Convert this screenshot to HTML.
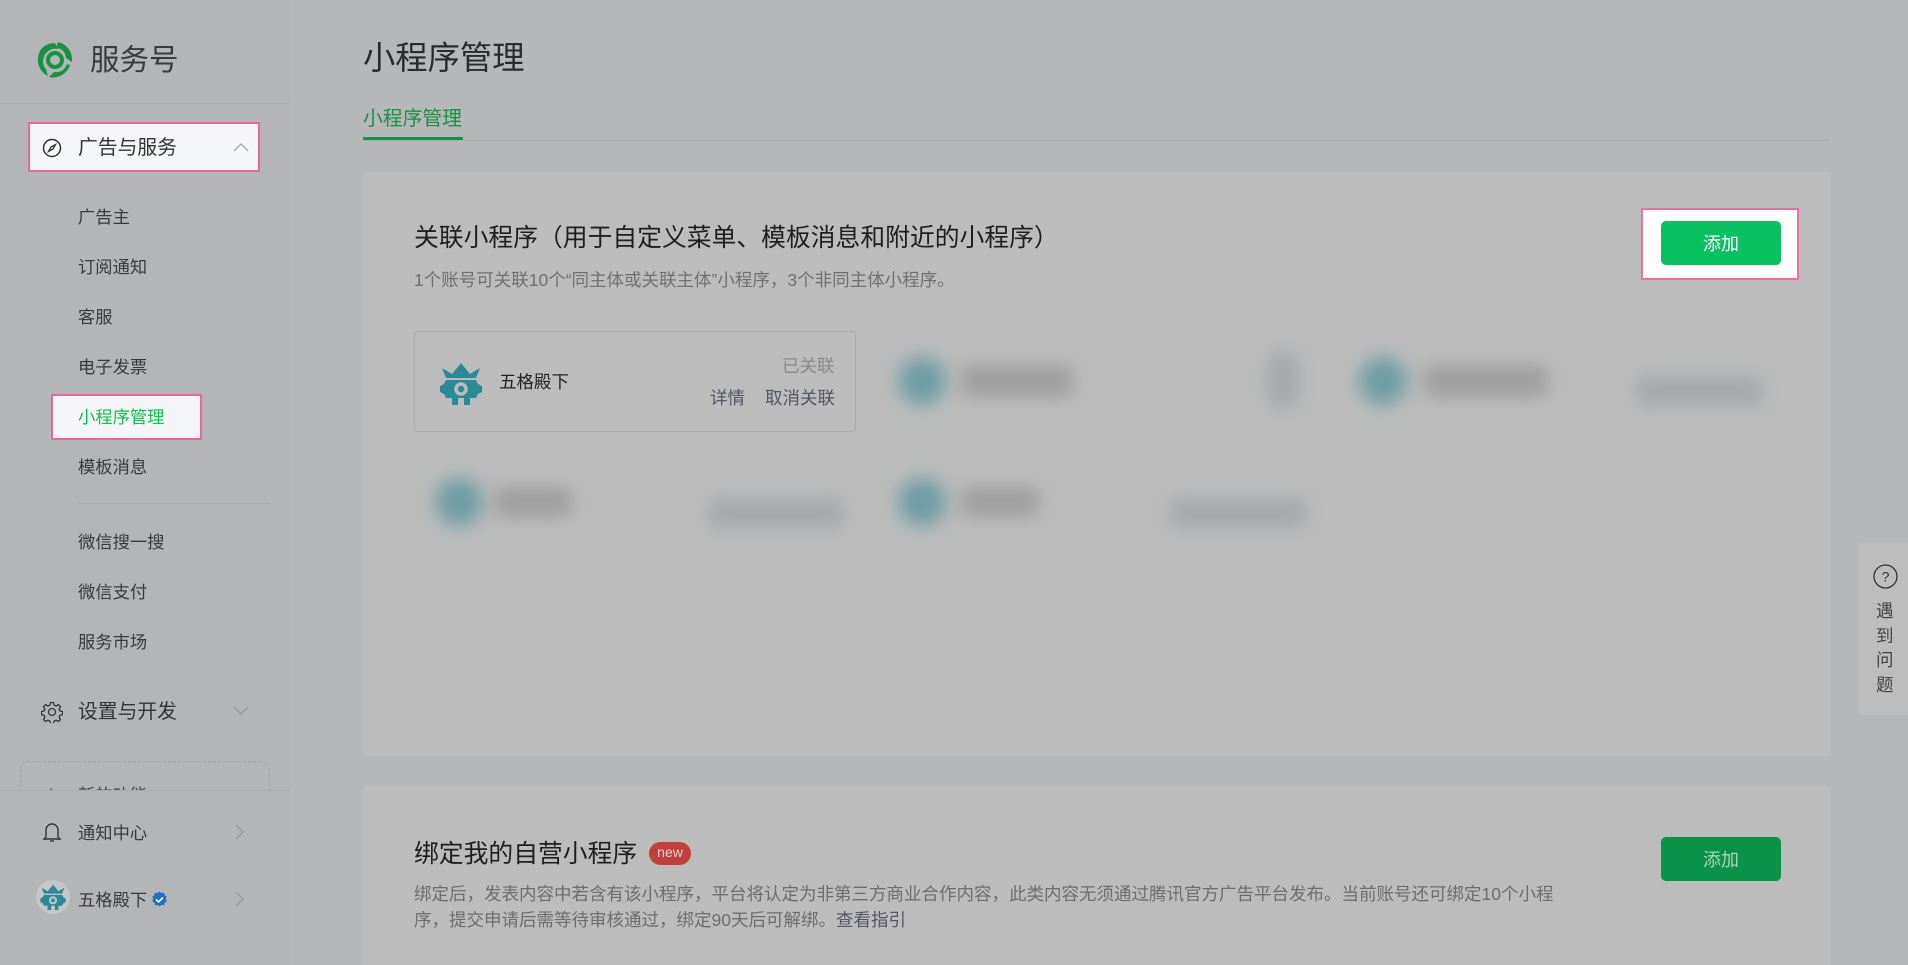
<!DOCTYPE html>
<html><head><meta charset="utf-8">
<style>
*{margin:0;padding:0;box-sizing:border-box}
html,body{width:1908px;height:965px;overflow:hidden}
body{background:#b6b7b9;font-family:"Liberation Sans","Noto Sans CJK SC",sans-serif;position:relative;color:#333}
.a{position:absolute;white-space:nowrap}
.side{position:absolute;left:0;top:0;width:290px;height:965px;background:#b4b5b7}
.mi{position:absolute;left:78px;font-size:17.3px;color:#3a3a3a;line-height:20px}
.card{position:absolute;background:#bcbcbc;border-radius:3px}
.blur{position:absolute;filter:blur(9px)}
</style></head><body>
<div class="side">
  <svg class="a" style="left:34px;top:40px" width="42" height="40" viewBox="0 0 42 40">
    <path d="M21 3 C10 3 3 11 4 21 C4 27 8 33 14 36 L12 29 C8 25 8 17 13 12 C16 9 20 8 24 9 Z" fill="#179245"/>
    <path d="M24 2 C33 4 39 12 38 22 L32 18 C32 13 28 8 22 8 Z" fill="#179245"/>
    <path d="M36 25 C33 34 24 39 15 37 L20 32 C26 33 31 30 33 24 Z" fill="#179245"/>
    <circle cx="21" cy="20" r="7" fill="none" stroke="#179245" stroke-width="4"/>
  </svg>
  <div class="a" style="left:90px;top:44px;font-size:29.5px;color:#3a3a3a;line-height:34px">服务号</div>
  <div class="a" style="left:0;top:103px;width:290px;height:1px;background:#a9aaac"></div>
  <div class="a" style="left:28px;top:122px;width:232px;height:50px;background:#f5f6f8;border:2px solid #e8689a"></div>
  <svg class="a" style="left:42px;top:138px" width="20" height="20" viewBox="0 0 20 20"><circle cx="10" cy="10" r="8.5" fill="none" stroke="#333" stroke-width="1.5"/><path d="M13.5 6.5 L11 11 L6.5 13.5 L9 9 Z" fill="none" stroke="#333" stroke-width="1.3"/></svg>
  <div class="a" style="left:78px;top:137px;font-size:19.8px;color:#333;line-height:22px">广告与服务</div>
  <svg class="a" style="left:233px;top:142px" width="16" height="10" viewBox="0 0 16 10"><path d="M1 9 L8 2 L15 9" fill="none" stroke="#aaa" stroke-width="1.4"/></svg>
  <div class="mi" style="top:207px">广告主</div>
  <div class="mi" style="top:257px">订阅通知</div>
  <div class="mi" style="top:307px">客服</div>
  <div class="mi" style="top:357px">电子发票</div>
  <div class="a" style="left:51px;top:394px;width:151px;height:46px;background:#f5f6f8;border:2px solid #e8689a"></div>
  <div class="mi" style="top:407px;color:#10c050">小程序管理</div>
  <div class="mi" style="top:457px">模板消息</div>
  <div class="a" style="left:78px;top:503px;width:192px;height:1px;background:#aaabad"></div>
  <div class="mi" style="top:532px">微信搜一搜</div>
  <div class="mi" style="top:582px">微信支付</div>
  <div class="mi" style="top:632px">服务市场</div>
  <svg class="a" style="left:41px;top:701px" width="22" height="22" viewBox="0 0 22 22"><path d="M9.5 1.5h3l.6 2.6 2 .9 2.3-1.4 2.1 2.1-1.4 2.3.9 2 2.6.6v3l-2.6.6-.9 2 1.4 2.3-2.1 2.1-2.3-1.4-2 .9-.6 2.6h-3l-.6-2.6-2-.9-2.3 1.4-2.1-2.1 1.4-2.3-.9-2-2.6-.6v-3l2.6-.6.9-2-1.4-2.3 2.1-2.1 2.3 1.4 2-.9z" fill="none" stroke="#333" stroke-width="1.3"/><circle cx="11" cy="11" r="3.5" fill="none" stroke="#333" stroke-width="1.3"/></svg>
  <div class="a" style="left:78px;top:701px;font-size:19.8px;color:#333;line-height:22px">设置与开发</div>
  <svg class="a" style="left:233px;top:706px" width="16" height="10" viewBox="0 0 16 10"><path d="M1 1 L8 8 L15 1" fill="none" stroke="#999" stroke-width="1.4"/></svg>
  <div class="a" style="left:20px;top:761px;width:250px;height:40px;border:1px dashed #a0a1a3;border-radius:8px;overflow:hidden"></div>
  <div class="a" style="left:0;top:762px;width:290px;height:28px;overflow:hidden">
    <div class="a" style="left:46px;top:21px;font-size:17px;color:#444">+</div>
    <div class="a" style="left:78px;top:19px;font-size:17.3px;color:#444">新的功能</div>
  </div>
  <div class="a" style="left:0;top:790px;width:290px;height:1px;background:#a9aaac"></div>
  <div class="a" style="left:0;top:791px;width:290px;height:174px;background:#b4b5b7"></div>
  <svg class="a" style="left:42px;top:821px" width="20" height="22" viewBox="0 0 20 22"><path d="M4 16 V9 a6 6 0 0 1 12 0 V16 L18 18 H2 Z" fill="none" stroke="#333" stroke-width="1.4"/><path d="M8 20 h4" stroke="#333" stroke-width="1.4"/></svg>
  <div class="mi" style="top:823px">通知中心</div>
  <svg class="a" style="left:235px;top:824px" width="10" height="16" viewBox="0 0 10 16"><path d="M1 1 L8 8 L1 15" fill="none" stroke="#999" stroke-width="1.4"/></svg>
  <div class="a" style="left:36px;top:880px;width:34px;height:34px;border-radius:50%;background:#c5c6c8"></div>
  <svg class="a" style="left:40px;top:884px" width="26" height="26" viewBox="0 0 42 43"><path d="M2 6 L12 12 L21 1 L30 12 L40 6 L36 16 H6 Z M6 18 H36 L38 22 L42 24 L42 30 L38 32 L36 36 H30 V43 H24 V36 H18 V43 H12 V36 H6 L4 32 L0 30 V24 L4 22 Z" fill="#2b8a93"/><circle cx="21" cy="27" r="5" fill="none" stroke="#c5c6c8" stroke-width="3.5"/></svg>
  <div class="mi" style="top:890px">五格殿下</div>
  <svg class="a" style="left:151px;top:891px" width="17" height="17" viewBox="0 0 17 17"><path d="M8.5 0.5 l2 1.5 2.5-.2.7 2.4 2 1.5-.9 2.3.9 2.3-2 1.5-.7 2.4-2.5-.2-2 1.5-2-1.5-2.5.2-.7-2.4-2-1.5.9-2.3-.9-2.3 2-1.5.7-2.4 2.5.2z" fill="#1e6fd0"/><path d="M5 8.5 l2.5 2.5 4.5-4.5" fill="none" stroke="#fff" stroke-width="1.6"/></svg>
  <svg class="a" style="left:235px;top:891px" width="10" height="16" viewBox="0 0 10 16"><path d="M1 1 L8 8 L1 15" fill="none" stroke="#999" stroke-width="1.4"/></svg>
</div>

<div class="a" style="left:363px;top:39px;font-size:32.3px;color:#2a2a2a;line-height:38px">小程序管理</div>
<div class="a" style="left:363px;top:108px;font-size:19.8px;color:#179245;line-height:22px">小程序管理</div>
<div class="a" style="left:363px;top:140px;width:1466px;height:1px;background:#a8a9ab"></div>
<div class="a" style="left:363px;top:137px;width:100px;height:3px;background:#179245"></div>

<div class="card" style="left:363px;top:172px;width:1467px;height:584px"></div>
<div class="a" style="left:414px;top:225px;font-size:24.8px;color:#1e1e1e;line-height:28px">关联小程序（用于自定义菜单、模板消息和附近的小程序）</div>
<div class="a" style="left:414px;top:270px;font-size:17.5px;color:#707070;line-height:20px">1个账号可关联10个“同主体或关联主体”小程序，3个非同主体小程序。</div>
<div class="a" style="left:1641px;top:208px;width:158px;height:72px;background:#fff;border:2px solid #ec6f9e"></div>
<div class="a" style="left:1661px;top:221px;width:120px;height:44px;background:#07c160;border-radius:5px;color:#fff;font-size:18px;text-align:center;line-height:46px">添加</div>

<div class="a" style="left:414px;top:331px;width:442px;height:101px;border:1px solid #a9aaac;border-radius:4px"></div>
<svg class="a" style="left:440px;top:362px" width="42" height="43" viewBox="0 0 42 43"><path d="M2 6 L12 12 L21 1 L30 12 L40 6 L36 16 H6 Z M6 18 H36 L38 22 L42 24 L42 30 L38 32 L36 36 H30 V43 H24 V36 H18 V43 H12 V36 H6 L4 32 L0 30 V24 L4 22 Z" fill="#2b8a93"/><circle cx="21" cy="27" r="5" fill="none" stroke="#bcbcbc" stroke-width="3.5"/></svg>
<div class="a" style="left:499px;top:372px;font-size:17.5px;color:#222;line-height:20px">五格殿下</div>
<div class="a" style="left:782px;top:356px;font-size:17.5px;color:#8a8a8a;line-height:20px">已关联</div>
<div class="a" style="left:710px;top:388px;font-size:17.5px;color:#556;line-height:20px">详情</div>
<div class="a" style="left:765px;top:388px;font-size:17.5px;color:#556;line-height:20px">取消关联</div>

<div class="blur" style="left:898px;top:357px;width:48px;height:48px;border-radius:50%;background:#6d9ea3"></div>
<div class="blur" style="left:962px;top:366px;width:110px;height:30px;background:#9c9c9c"></div>
<div class="blur" style="left:1268px;top:352px;width:30px;height:56px;background:#a6a8ac"></div>
<div class="blur" style="left:1359px;top:357px;width:48px;height:48px;border-radius:50%;background:#6d9ea3"></div>
<div class="blur" style="left:1425px;top:366px;width:122px;height:30px;background:#9c9c9c"></div>
<div class="blur" style="left:1636px;top:376px;width:126px;height:30px;background:#a6a8ac"></div>
<div class="blur" style="left:435px;top:478px;width:48px;height:48px;border-radius:50%;background:#6d9ea3"></div>
<div class="blur" style="left:495px;top:488px;width:76px;height:28px;background:#9c9c9c"></div>
<div class="blur" style="left:708px;top:498px;width:136px;height:30px;background:#a6a8ac"></div>
<div class="blur" style="left:898px;top:478px;width:48px;height:48px;border-radius:50%;background:#6d9ea3"></div>
<div class="blur" style="left:962px;top:488px;width:76px;height:28px;background:#9c9c9c"></div>
<div class="blur" style="left:1170px;top:498px;width:136px;height:30px;background:#a6a8ac"></div>

<div class="card" style="left:363px;top:786px;width:1467px;height:190px"></div>
<div class="a" style="left:414px;top:841px;font-size:24.8px;color:#1e1e1e;line-height:28px">绑定我的自营小程序</div>
<div class="a" style="left:649px;top:842px;width:42px;height:23px;border-radius:12px;background:#c0403e;color:#f0d0d0;font-size:14px;text-align:center;line-height:21px">new</div>
<div class="a" style="left:1661px;top:837px;width:120px;height:44px;background:#0a9248;border-radius:5px;color:#a8d8b8;font-size:18px;text-align:center;line-height:46px">添加</div>
<div class="a" style="left:414px;top:881px;font-size:17.5px;color:#6d6d6d;line-height:26px">绑定后，发表内容中若含有该小程序，平台将认定为非第三方商业合作内容，此类内容无须通过腾讯官方广告平台发布。当前账号还可绑定10个小程<br>序，提交申请后需等待审核通过，绑定90天后可解绑。<span style="color:#556">查看指引</span></div>

<div class="a" style="left:1858px;top:543px;width:50px;height:172px;background:#bdbdbd;border-radius:4px 0 0 4px"></div>
<svg class="a" style="left:1873px;top:564px" width="25" height="25" viewBox="0 0 25 25"><circle cx="12.5" cy="12.5" r="11.5" fill="none" stroke="#333" stroke-width="1.3"/><text x="12.5" y="17.5" font-size="14" text-anchor="middle" fill="#333" font-family="Liberation Sans">?</text></svg>
<div class="a" style="left:1876px;top:599px;font-size:17.5px;color:#444;line-height:24.5px;white-space:normal;width:20px">遇到问题</div>
</body></html>
